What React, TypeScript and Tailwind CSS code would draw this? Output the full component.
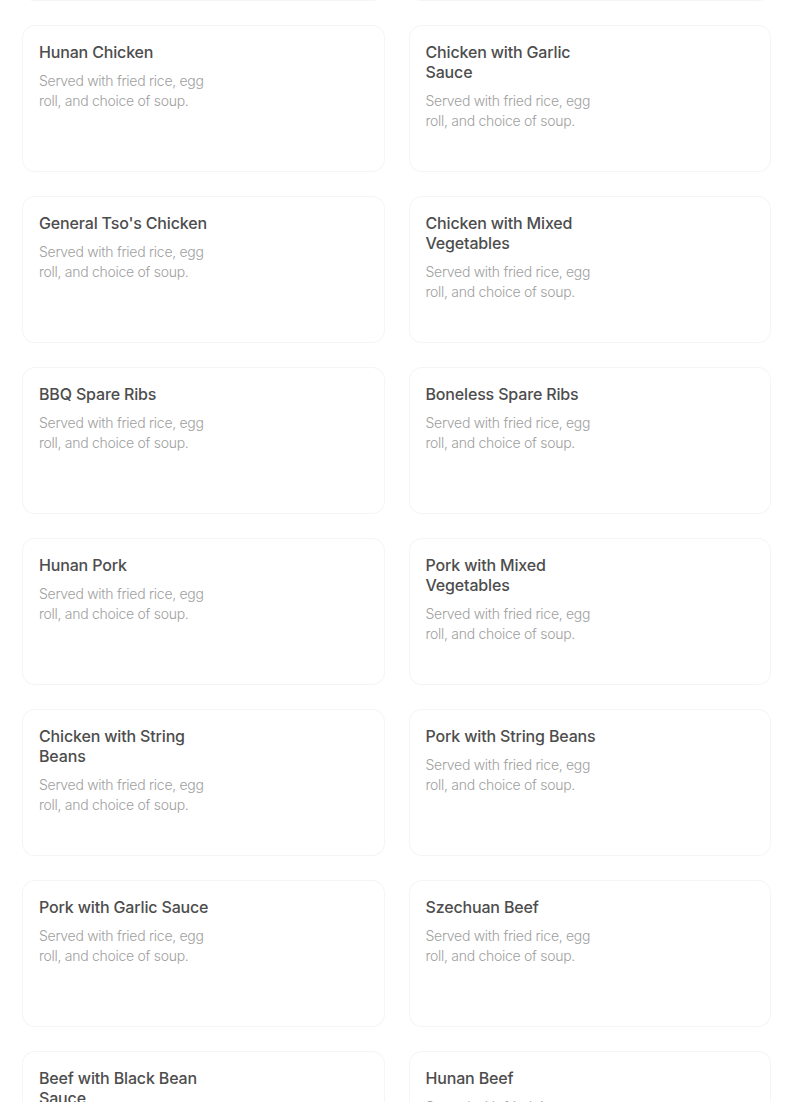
const dishes = [
  'Hunan Chicken',
  'Chicken with Garlic Sauce',
  "General Tso's Chicken",
  'Chicken with Mixed Vegetables',
  'BBQ Spare Ribs',
  'Boneless Spare Ribs',
  'Hunan Pork',
  'Pork with Mixed Vegetables',
  'Chicken with String Beans',
  'Pork with String Beans',
  'Pork with Garlic Sauce',
  'Szechuan Beef',
  'Beef with Black Bean Sauce',
  'Hunan Beef',
]

const cardClass =
  'h-[145px] rounded-xl bg-white px-4 pt-4 shadow-[0_0_0_1px_#f5f5f5,0_1px_2px_rgba(0,0,0,0.02)]'

function DishCard({ name }: { name: string }) {
  return (
    <div className={cardClass}>
      <div className="w-[186px]">
        <h3 className="text-[16px] leading-5 font-medium tracking-[-0.01em] text-[#4d4d4d]">
          {name}
        </h3>
        <p className="mt-[9px] text-[14px] leading-5 font-light tracking-[-0.02em] text-[#a0a0a0]">
          Served with fried rice, egg roll, and choice of soup.
        </p>
      </div>
    </div>
  )
}

export default function App() {
  return (
    <div
      className="h-[1102px] overflow-hidden bg-white"
      style={{ fontFamily: 'Inter, "Noto Sans", sans-serif' }}
    >
      {/* list is scrolled: the row above only shows its bottom edge */}
      <div className="-mt-[145px] grid grid-cols-2 gap-[26px] pr-[34px] pl-[23px]">
        <div className={cardClass} />
        <div className={cardClass} />
        {dishes.map((d) => (
          <DishCard key={d} name={d} />
        ))}
      </div>
    </div>
  )
}
